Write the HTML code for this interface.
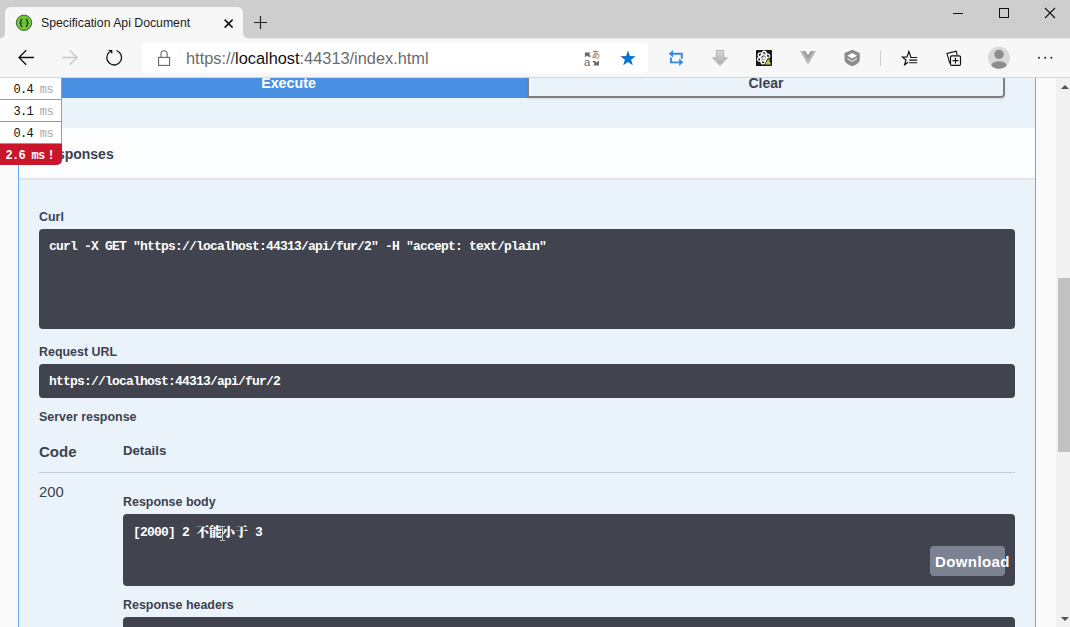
<!DOCTYPE html>
<html lang="zh">
<head>
<meta charset="utf-8">
<title>Specification Api Document</title>
<style>
*{box-sizing:border-box;margin:0;padding:0}
html,body{width:1070px;height:627px;overflow:hidden;background:#fafafa}
body{position:relative;font-family:"Liberation Sans","Noto Sans CJK SC",sans-serif;color:#3b4151}
.abs{position:absolute}
/* ---------- browser chrome ---------- */
#tabbar{left:0;top:0;width:1070px;height:38px;background:#cecece}
#tab{left:5px;top:7px;width:238px;height:31px;background:#f7f7f7;border-radius:6px 6px 0 0}
#tabtitle{z-index:3;left:41px;top:16px;font-size:12.25px;color:#1b1b1b;white-space:nowrap;line-height:15px}
#toolbar{left:0;top:38px;width:1070px;height:39px;background:#f7f7f7}
#tbline{left:0;top:77px;width:1070px;height:1px;background:#d6d6d6}
#urlbar{left:142px;top:43px;width:506px;height:30px;background:#fff;border-radius:4px}
#url{left:186px;top:49px;font-size:16.35px;line-height:19px;color:#6b6b6b;white-space:nowrap}
#url b{font-weight:normal;color:#111}
/* ---------- page ---------- */
#page{left:0;top:78px;width:1056px;height:549px;background:#fafafa;overflow:hidden}
#opblock{left:18px;top:-10px;width:1018px;height:600px;background:#ebf3fa;border:1px solid #61affe}
#exec{left:39px;top:-11px;width:489px;height:31px;padding-left:10px;background:#4990e2;color:#fff;font-weight:700;font-size:14.25px;text-align:center;line-height:33px}
#clear{left:527px;top:-11px;width:478px;height:31px;border:2px solid #808080;border-radius:0 4px 4px 0;color:#3b4151;font-weight:700;font-size:14px;text-align:center;line-height:29px;box-shadow:0 1px 2px rgba(0,0,0,.1)}
#resphead{left:19px;top:50px;width:1016px;height:50px;background:#fbfdfe;box-shadow:0 1px 2px rgba(0,0,0,.1)}
#resptitle{left:39px;top:68px;font-size:14px;font-weight:700;line-height:17px}
.lbl{font-size:12.45px;font-weight:700;line-height:14px;white-space:nowrap}
.code{background:#41444e;border-radius:4px;color:#fff;font-family:"Liberation Mono","Noto Sans CJK SC",monospace;font-weight:700;font-size:13px;letter-spacing:-0.8px;line-height:14px;white-space:pre;padding:11px 10px 9px}
.code .cj{font-family:"Noto Serif CJK SC","Noto Sans CJK SC",serif;font-size:13px;letter-spacing:0;font-weight:900}
#hr{left:39px;top:394px;width:976px;height:1px;background:#c5cfdb}
#dl{left:930px;top:468px;width:75px;height:30px;padding-left:5px;background:#7d8293;border-radius:4px;color:#fff;font-weight:700;font-size:15px;letter-spacing:0.4px;line-height:31px;text-align:left;white-space:nowrap}
/* ---------- scrollbar ---------- */
#sb{left:1056px;top:78px;width:17px;height:549px;background:#f1f1f1}
#thumb{left:1058px;top:278px;width:15px;height:174px;background:#c1c1c1}
.arr{width:0;height:0;border-left:4px solid transparent;border-right:4px solid transparent}
/* ---------- profiler ---------- */
.pr{left:0;width:62px;height:22px;background:#fff;border-right:1px solid #999;border-bottom:1px solid #999;font-family:"Liberation Mono",monospace;font-size:12px;letter-spacing:-0.6px;line-height:25px;text-align:right;padding-right:8px;color:#111;white-space:pre}
.pr i{font-style:normal;color:#aaa}
#prred{left:0;top:144px;width:62px;height:21px;background:#c9162a;border-radius:0 0 5px 0;font-family:"Liberation Mono",monospace;font-size:12px;letter-spacing:-0.7px;font-weight:700;line-height:24px;color:#fff;text-align:right;padding-right:8px;white-space:pre}
</style>
</head>
<body>
<!-- browser chrome -->
<div id="tabbar" class="abs"></div>
<div id="tabtitle" class="abs">Specification Api Document</div>
<div id="toolbar" class="abs"></div>
<div id="urlbar" class="abs"></div>
<div id="url" class="abs">https://<b>localhost</b>:44313/index.html</div>
<div id="tbline" class="abs"></div>
<svg class="abs" style="left:0;top:0" width="1070" height="78" viewBox="0 0 1070 78" fill="none">
  <!-- tab shape -->
  <rect x="0" y="38" width="1070" height="1" fill="#e6e6e6"/>
  <path d="M-1 39 V38.4 Q5 38.4 5 32.4 L5 13 Q5 7 11 7 L237 7 Q243 7 243 13 L243 32.4 Q243 38.4 249 38.4 V39 Z" fill="#f7f7f7"/>
  <!-- favicon -->
  <circle cx="24" cy="22.8" r="7.7" fill="#74c830" stroke="#35584a" stroke-width="0.9"/>
  <rect x="21.6" y="21.8" width="4.8" height="2" fill="#67b52c"/>
  <path d="M22.4 19.2 Q20.9 19.2 20.9 20.6 L20.9 21.6 Q20.9 22.8 19.5 22.8 Q20.9 22.8 20.9 24 L20.9 25 Q20.9 26.5 22.4 26.5" stroke="#24403c" stroke-width="1.4"/>
  <path d="M25.8 19.2 Q27.3 19.2 27.3 20.6 L27.3 21.6 Q27.3 22.8 28.7 22.8 Q27.3 22.8 27.3 24 L27.3 25 Q27.3 26.5 25.8 26.5" stroke="#24403c" stroke-width="1.4"/>
  <!-- tab close -->
  <path d="M224.6 19.6 L232.6 27.6 M232.6 19.6 L224.6 27.6" stroke="#111" stroke-width="1.5"/>
  <!-- new tab -->
  <path d="M254 22.5 H267 M260.5 16 V29" stroke="#222" stroke-width="1.2"/>
  <!-- window controls -->
  <path d="M953 13.5 H963" stroke="#111" stroke-width="1"/>
  <rect x="999.5" y="8.5" width="9" height="9" stroke="#111" stroke-width="1"/>
  <path d="M1045 8 L1055 18 M1055 8 L1045 18" stroke="#111" stroke-width="1.1"/>
  <!-- back -->
  <path d="M34 57.5 H19 M26.2 50.3 L19 57.5 L26.2 64.7" stroke="#111" stroke-width="1.3"/>
  <!-- forward -->
  <path d="M62 57.5 H77 M69.8 50.3 L77 57.5 L69.8 64.7" stroke="#c8c8c8" stroke-width="1.3"/>
  <!-- refresh -->
  <path d="M116.4 50.5 A7.4 7.4 0 1 1 109.4 51.9" stroke="#111" stroke-width="1.3"/>
  <path d="M108 50 H112.3 V54 Z" fill="#111"/>
  <!-- lock -->
  <rect x="158.6" y="57.4" width="11" height="8" stroke="#666" stroke-width="1.1"/>
  <path d="M161 57.4 V54 A3.1 3.3 0 0 1 167.2 54 V57.4" stroke="#666" stroke-width="1.1"/>
  <!-- translate -->
  <text x="591.6" y="58.2" font-family="'Liberation Sans','Noto Sans CJK JP',sans-serif" font-size="8.6" fill="#666">あ</text>
  <text x="584" y="65.8" font-family="'Liberation Sans',sans-serif" font-size="11.3" fill="#666">a</text>
  <path d="M584.9 52.4 H590.7 L589 54 L590.9 56.7 H588.3 L587 55.5 L584.9 57.4 Z" fill="#666"/>
  <path d="M598.9 65.5 H592.9 L594.7 63.9 L592.4 61 H595 L596.6 62.4 L598.9 60.4 Z" fill="#666"/>
  <!-- star -->
  <path d="M628 50.6 L629.9 56.1 L635.7 56.2 L631.1 59.7 L632.8 65.3 L628 62 L623.2 65.3 L624.9 59.7 L620.3 56.2 L626.1 56.1 Z" fill="#0b72d0"/>
  <!-- sync -->
  <path d="M672.5 53.8 H681.8 V58.7" stroke="#3686e8" stroke-width="1.9"/>
  <path d="M668.8 53.7 L673 49.9 V57.5 Z" fill="#3686e8"/>
  <path d="M679.5 62.4 H670.9 V57.4" stroke="#3686e8" stroke-width="1.9"/>
  <path d="M683.3 62.3 L679.1 58.6 V66 Z" fill="#3686e8"/>
  <!-- download arrow -->
  <defs><linearGradient id="dg" x1="0" y1="0" x2="0" y2="1"><stop offset="0" stop-color="#d9d9d9"/><stop offset="1" stop-color="#adadad"/></linearGradient></defs>
  <path d="M716.3 50.4 H723.7 V57.8 H727.4 L720 65.4 L712.6 57.8 H716.3 Z" fill="url(#dg)" stroke="#a8a8a8" stroke-width="0.8"/>
  <!-- react devtools -->
  <rect x="756" y="50" width="16" height="16" rx="0.8" fill="#181818"/>
  <g stroke="#fff" stroke-width="1.3" transform="rotate(-22 763.6 57.6)"><ellipse cx="763.6" cy="57.6" rx="6.4" ry="2.7"/><ellipse cx="763.6" cy="57.6" rx="6.4" ry="2.7" transform="rotate(60 763.6 57.6)"/><ellipse cx="763.6" cy="57.6" rx="6.4" ry="2.7" transform="rotate(120 763.6 57.6)"/></g>
  <circle cx="763.9" cy="57.9" r="1.7" fill="#fff"/>
  <path d="M768.2 57.6 L772 65 H764.4 Z" fill="#181818"/>
  <path d="M768.2 59 L771.2 64.4 H765.2 Z" fill="#c3d64a"/>
  <!-- vue -->
  <path d="M800 51 H805 L808 56.2 L811 51 H816 L808 64.4 Z" fill="#b5b5b5"/>
  <path d="M803 51 H805.4 L808 55.6 L810.6 51 H813 L808 59.6 Z" fill="#999"/>
  <!-- shield -->
  <path d="M852.2 49.8 L859.8 53 V59.5 Q859.8 63.5 852.2 66.2 Q844.5 63.5 844.5 59.5 V53 Z" fill="#8b8b8b"/>
  <path d="M852.2 53 L857 55.8 L852.2 58.6 L847.4 55.8 Z" fill="#fff"/>
  <path d="M847.4 58.6 L852.2 61.4 L857 58.6" stroke="#e8e8e8" stroke-width="1.2"/>
  <!-- separator -->
  <path d="M880.5 50 V66" stroke="#cfcfcf" stroke-width="1"/>
  <!-- favorites -->
  <path d="M911 57.4 L908.9 51.6 L907 56.9 L902.4 57.1 L906 60 L904.6 64.8 L908.2 62.2" stroke="#111" stroke-width="1.2" stroke-linejoin="miter"/>
  <path d="M910.4 57.5 H917.2 M909.2 60.1 H917.2 M909.2 62.7 H917.2" stroke="#111" stroke-width="1.1"/>
  <!-- collections -->
  <path d="M949.8 63.4 L947 53.5 L956.2 51.2 L957.2 55" stroke="#111" stroke-width="1.1"/>
  <rect x="950.5" y="55.8" width="10" height="9.6" rx="1.2" stroke="#111" stroke-width="1.2" fill="#f7f7f7"/>
  <path d="M952.6 60.6 H958.4 M955.5 57.7 V63.5" stroke="#111" stroke-width="1.2"/>
  <!-- avatar -->
  <circle cx="999" cy="57.8" r="11" fill="#d9d9d9"/>
  <circle cx="999" cy="54.4" r="4.7" fill="#8d8d8d"/>
  <path d="M991.2 65.4 Q992.6 61.2 999 61.2 Q1005.4 61.2 1006.8 65.4 Q1003.8 68.7 999 68.7 Q994.2 68.7 991.2 65.4 Z" fill="#8d8d8d"/>
  <!-- menu dots -->
  <circle cx="1039" cy="57.7" r="0.95" fill="#111"/><circle cx="1045.2" cy="57.7" r="0.95" fill="#111"/><circle cx="1051.4" cy="57.7" r="0.95" fill="#111"/>
</svg>

<!-- page -->
<div id="page" class="abs">
  <div id="opblock" class="abs"></div>
  <div id="exec" class="abs">Execute</div>
  <div id="clear" class="abs">Clear</div>
  <div id="resphead" class="abs"></div>
  <div id="resptitle" class="abs">Responses</div>

  <div class="abs lbl" style="left:39px;top:132px">Curl</div>
  <div class="abs code" style="left:39px;top:151px;width:976px;height:100px">curl -X GET "https://localhost:44313/api/fur/2" -H "accept: text/plain"</div>
  <div class="abs lbl" style="left:39px;top:267px">Request URL</div>
  <div class="abs code" style="left:39px;top:286px;width:976px;height:34px">https://localhost:44313/api/fur/2</div>
  <div class="abs lbl" style="left:39px;top:332px">Server response</div>
  <div class="abs lbl" style="left:39px;top:365px;font-size:15px;line-height:17px">Code</div>
  <div class="abs lbl" style="left:123px;top:366px;font-size:13.2px">Details</div>
  <div id="hr" class="abs"></div>
  <div class="abs" style="left:39px;top:406px;font-size:14.8px;line-height:17px">200</div>
  <div class="abs lbl" style="left:123px;top:417px">Response body</div>
  <div class="abs code" style="left:123px;top:436px;width:892px;height:72px;padding-top:10px">[2000] 2 <span class="cj">不能小于</span> 3</div>
  <div id="dl" class="abs">Download</div>
  <div class="abs lbl" style="left:123px;top:520px">Response headers</div>
  <div class="abs code" style="left:123px;top:539px;width:892px;height:40px"></div>
</div>

<svg class="abs" style="left:218px;top:524px;z-index:5" width="10" height="19" viewBox="0 0 10 19" fill="none"><path d="M2 2.5 H4 Q4.5 2.5 4.5 3.5 V15.5 Q4.5 16.5 4 16.5 H2 M7 2.5 H5 Q4.5 2.5 4.5 3.5 M4.5 15.5 Q4.5 16.5 5 16.5 H7" stroke="#cfcfcf" stroke-width="1"/></svg>
<!-- scrollbar -->
<div id="sb" class="abs"></div>
<div id="thumb" class="abs"></div>
<div class="abs arr" style="left:1060.5px;top:85px;border-bottom:4px solid #505050"></div>
<div class="abs arr" style="left:1060.5px;top:617px;border-top:4px solid #505050"></div>

<!-- profiler -->
<div class="abs pr" style="top:78px">0.4 <i>ms</i></div>
<div class="abs pr" style="top:100px">3.1 <i>ms</i></div>
<div class="abs pr" style="top:122px">0.4 <i>ms</i></div>
<div id="prred" class="abs">2.6 ms<span style="margin-left:3px">!</span></div>
</body>
</html>
